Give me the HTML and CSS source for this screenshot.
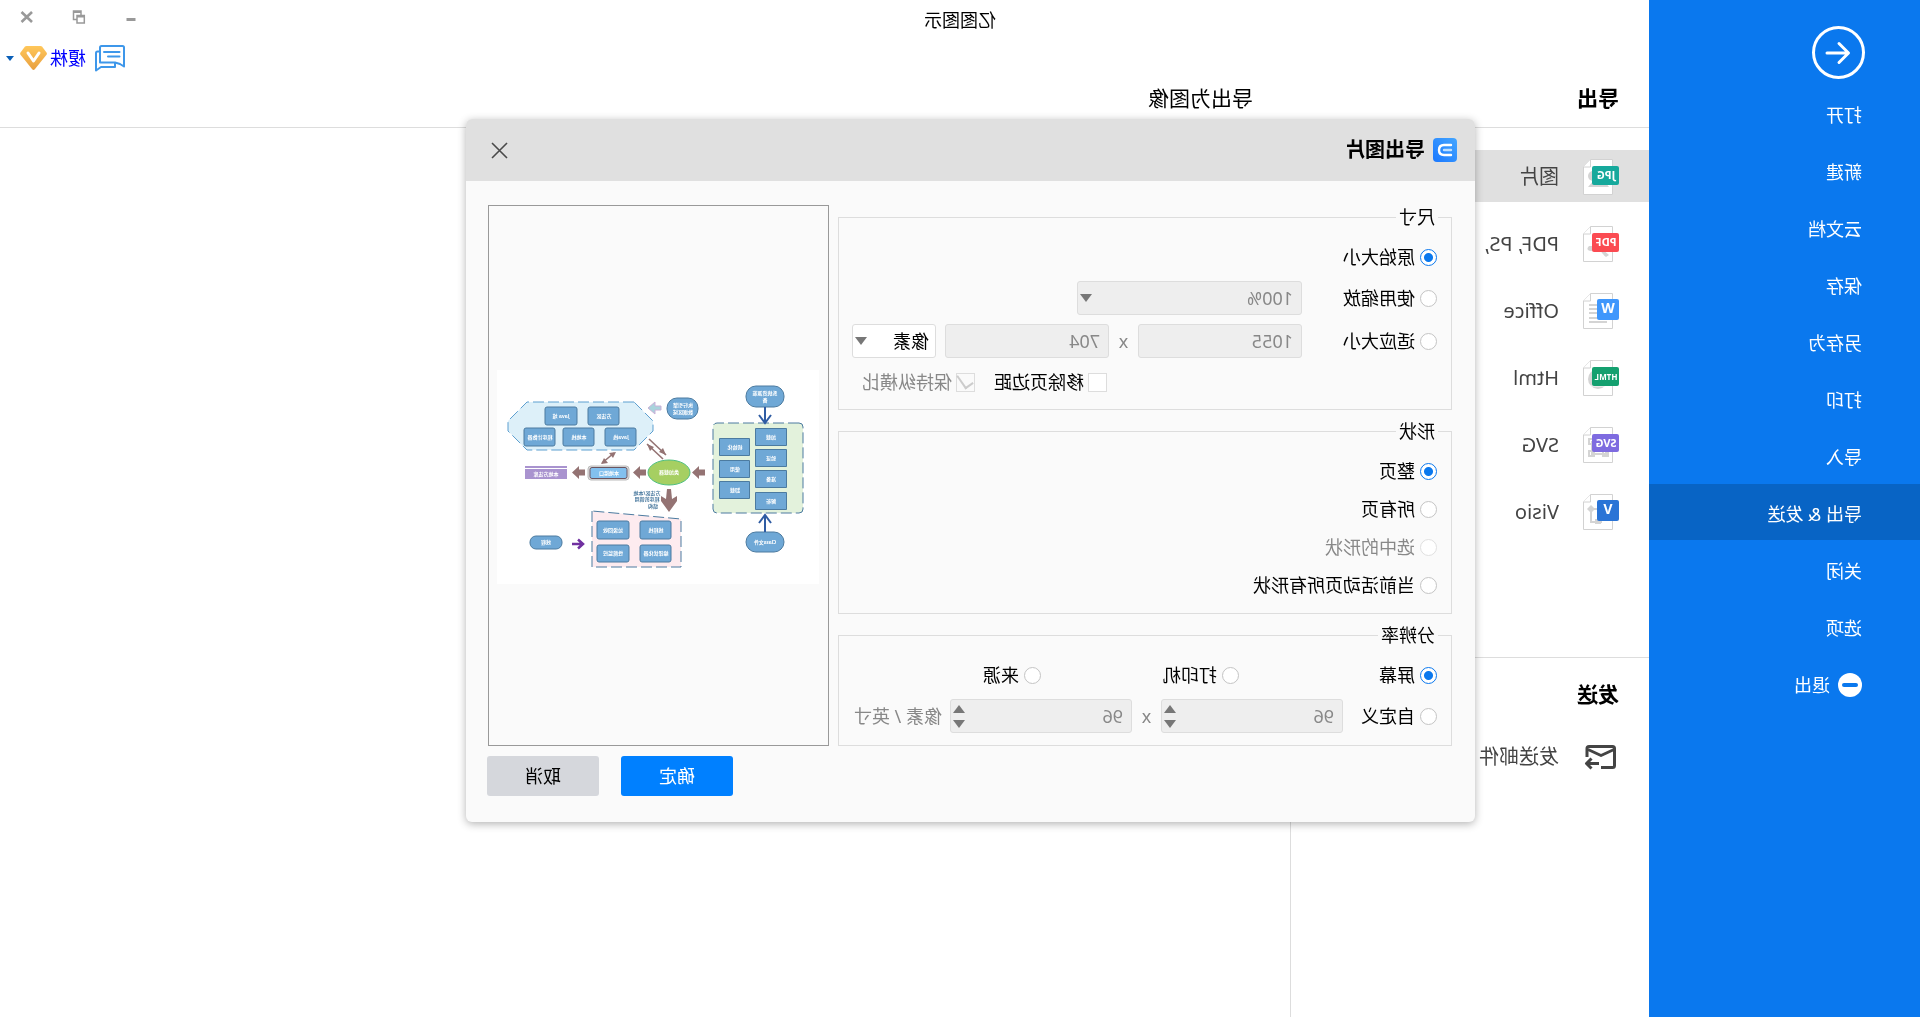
FILE: index.html
```html
<!DOCTYPE html>
<html lang="zh-CN">
<head>
<meta charset="utf-8">
<title>亿图图示</title>
<link rel="stylesheet" href="styles.css">
</head>
<body>
<div class="app">
  <nav class="sidebar">
    <button class="back" type="button" aria-label="返回">
      <svg width="53" height="53" viewBox="0 0 53 53" fill="none" stroke="#fff" stroke-width="3" stroke-linecap="round" stroke-linejoin="round"><circle cx="26.500" cy="26.500" r="25"/><path d="M38 27H17M26 17.500L16.500 27l9.500 9.500"/></svg>
    </button>
    <a class="nav-item" href="#">打开</a>
    <a class="nav-item" href="#">新建</a>
    <a class="nav-item" href="#">云文档</a>
    <a class="nav-item" href="#">保存</a>
    <a class="nav-item" href="#">另存为</a>
    <a class="nav-item" href="#">打印</a>
    <a class="nav-item" href="#">导入</a>
    <a class="nav-item current" href="#">导出 &amp; 发送</a>
    <a class="nav-item" href="#">关闭</a>
    <a class="nav-item" href="#">选项</a>
    <a class="nav-item" href="#"><svg width="24" height="24" viewBox="0 0 24 24"><circle cx="12" cy="12" r="12" fill="#fff"/><rect x="4" y="10" width="16" height="4" rx="2" fill="#0a78ee"/></svg>退出</a>
  </nav>

  <main class="main">
    <header class="top">
      <div class="titlebar">
        <span class="app-title">亿图图示</span>
        <div class="win-controls">
          <button type="button" aria-label="最小化"><svg width="14" height="14" viewBox="0 0 14 14"><path d="M2.500 9.500h9" stroke="#999" stroke-width="3"/></svg></button>
          <button type="button" aria-label="还原"><svg width="14" height="14" viewBox="0 0 14 14" fill="none" stroke="#999" stroke-width="1.500"><path d="M9 9.500h3.500V1H5v4"/><path d="M5 2h8" stroke-width="2"/><path d="M1.700 5.500H9V13H1.700z"/><path d="M1.700 6.500H9" stroke-width="2"/></svg></button>
          <button type="button" aria-label="关闭"><svg width="14" height="14" viewBox="0 0 14 14"><path d="M2 2l10.500 10M12.500 2L2 12" stroke="#999" stroke-width="2.600"/></svg></button>
        </div>
      </div>
      <div class="toolbar">
        <button type="button" class="chat" aria-label="消息"><svg width="30" height="27" viewBox="0 0 30 27" fill="none" stroke="#3e97ea" stroke-width="2" stroke-linejoin="round" stroke-linecap="round"><path d="M5 19L1 21.500V2.500Q1 1 2.500 1h21Q25 1 25 2.500V17.500H10L5 19"/><path d="M25 6.500h2.500Q29 6.500 29 8v17.500L24 22H10v-4"/><path d="M5.500 7h15.500M5.500 11.500H17"/></svg></button>
        <a class="user" href="#">榎株</a>
        <svg class="vip" width="27" height="24" viewBox="0 0 27 24"><defs><linearGradient id="gold" x1="0" y1="0" x2="0" y2="1"><stop offset="0" stop-color="#ffc75a"/><stop offset="1" stop-color="#e89f3f"/></linearGradient></defs><path d="M6.500 0h14q1 0 1.700.8l4.300 5.700q.8 1.200 0 2.300L15 23q-1.500 1.800-3 0L.5 8.800q-.8-1.100 0-2.300L4.800.8Q5.500 0 6.500 0z" fill="url(#gold)"/><path d="M8 7l5.500 8L19 7" fill="none" stroke="#fff" stroke-width="3" stroke-linecap="round" stroke-linejoin="round"/></svg>
        <svg class="caret" width="8" height="5" viewBox="0 0 8 5"><path d="M0 0h8L4 5z" fill="#0a5fb8"/></svg>
      </div>
      <div class="headings">
        <h2 class="head-export">导出</h2>
        <h2 class="head-image">导出为图像</h2>
      </div>
    </header>

    <div class="content">
      <aside class="formats">
        <a class="format current" href="#"><svg class="ficon" width="36" height="36" viewBox="0 0 36 36"><path class="sheet" d="M6.500.5H28.500L35.500 8v27.500h-29z"/><path class="sheet" d="M28.500.5V8h7"/><circle class="mark" cx="26" cy="17" r="5"/><path class="mark" d="M10 28l6-8 5 5 4-4 6 7z"/><rect y="7" width="27" height="19" rx="2" fill="#16a99c"/><text class="tag" x="13" y="20">JPG</text></svg>图片</a>
        <a class="format" href="#"><svg class="ficon" width="36" height="36" viewBox="0 0 36 36"><path class="sheet" d="M6.500.5H28.500L35.500 8v27.500h-29z"/><path class="sheet" d="M28.500.5V8h7"/><path class="mark" d="M10 29q6-5 10-9l10 0q4 4-2 5-4 0-8-3-3 6-7 9z"/><rect y="7" width="27" height="19" rx="2" fill="#fb4b52"/><text class="tag" x="13" y="20">PDF</text></svg>PDF, PS,</a>
        <a class="format" href="#"><svg class="ficon" width="36" height="36" viewBox="0 0 36 36"><path class="sheet" d="M6.500.5H28.500L35.500 8v27.500h-29z"/><path class="sheet" d="M28.500.5V8h7"/><path class="line" d="M20 12h10M20 16h10M20 20h10M20 25h10M12 29h18"/><rect y="6" width="22" height="21" rx="2" fill="#3f97fc"/><text class="tag big" x="11" y="20">W</text></svg>Office</a>
        <a class="format" href="#"><svg class="ficon" width="36" height="36" viewBox="0 0 36 36"><path class="sheet" d="M6.500.5H28.500L35.500 8v27.500h-29z"/><path class="sheet" d="M28.500.5V8h7"/><circle class="mark" cx="21" cy="19" r="10"/><path d="M12 26h18" stroke="#fff"/><rect y="7" width="27" height="19" rx="2" fill="#14a06f"/><text class="tag small" x="13" y="20">HTML</text></svg>Html</a>
        <a class="format" href="#"><svg class="ficon" width="36" height="36" viewBox="0 0 36 36"><path class="sheet" d="M6.500.5H28.500L35.500 8v27.500h-29z"/><path class="sheet" d="M28.500.5V8h7"/><path class="line" d="M13 15h14v12H13zM25 12h5v5h-5zM25 24h5v5h-5zM11 24h5v5h-5z"/><rect y="7" width="27" height="18" rx="2" fill="#7e6be0"/><text class="tag" x="13" y="20">SVG</text></svg>SVG</a>
        <a class="format" href="#"><svg class="ficon" width="36" height="36" viewBox="0 0 36 36"><path class="sheet" d="M6.500.5H28.500L35.500 8v27.500h-29z"/><path class="sheet" d="M28.500.5V8h7"/><path class="mark" d="M28 11l4 4-4 4-4-4z"/><path class="line" d="M28 18v10H17M22 15h6"/><rect class="mark" x="18" y="25" width="6" height="5"/><rect y="6" width="22" height="21" rx="2" fill="#2a74d6"/><text class="tag big" x="11" y="20">V</text></svg>Visio</a>
        <section class="send">
          <h2 class="head-send">发送</h2>
          <a class="format mail" href="#"><svg class="ficon" width="36" height="30" viewBox="0 0 36 30" fill="none" stroke="#444" stroke-width="3" stroke-linejoin="round"><path d="M18 25.500H6.500Q4.500 25.500 4.500 23.500V6.500Q4.500 4.500 6.500 4.500H30Q32 4.500 32 6.500V15"/><path d="M5 7.500l13 6 13-6"/><path d="M20 21.500h12M27.500 16.500l5 5-5 5"/></svg>发送邮件</a>
        </section>
      </aside>
      <section class="stage"></section>
    </div>
  </main>

  <form class="dialog" role="dialog" aria-labelledby="dlg-title">
    <header class="dlg-head">
      <svg width="24" height="24" viewBox="0 0 24 24"><defs><linearGradient id="logo" x1="0" y1="0" x2="1" y2="1"><stop offset="0" stop-color="#45a6ff"/><stop offset="1" stop-color="#1a78ff"/></linearGradient></defs><rect width="24" height="24" rx="4" fill="url(#logo)"/><path d="M6 7h7q5 0 5 5t-5 5H6" fill="none" stroke="#fff" stroke-width="2.400" stroke-linecap="round"/><path d="M6 12h7" stroke="#bfe0ff" stroke-width="2.400" stroke-linecap="round"/></svg>
      <h1 id="dlg-title">导出图片</h1>
      <button type="button" class="dlg-close" aria-label="关闭"><svg width="17" height="17" viewBox="0 0 17 17"><path d="M1 1l15 15M16 1L1 16" stroke="#4a4a4a" stroke-width="1.600"/></svg></button>
    </header>
    <div class="dlg-body">
      <div class="groups">
        <fieldset>
          <legend>尺寸</legend>
          <div class="row"><label class="opt"><input type="radio" name="size" checked>原始大小</label></div>
          <div class="row field-row">
            <label class="opt size-label"><input type="radio" name="size">使用缩放</label>
            <span class="pick zoom"><select aria-label="缩放" disabled><option>100%</option></select></span>
          </div>
          <div class="row field-row">
            <label class="opt size-label"><input type="radio" name="size">适应大小</label>
            <input class="field dim" type="text" value="1055" aria-label="宽度" disabled>
            <span class="times">x</span>
            <input class="field dim" type="text" value="704" aria-label="高度" disabled>
            <span class="pick unit"><select aria-label="单位"><option>像素</option></select></span>
          </div>
          <div class="row checks">
            <label class="opt tick"><input type="checkbox">移除页边距</label>
            <label class="opt tick off"><input type="checkbox" checked disabled>保持纵横比</label>
          </div>
        </fieldset>
        <fieldset class="shapes">
          <legend>形状</legend>
          <div class="row"><label class="opt"><input type="radio" name="shape" checked>整页</label></div>
          <div class="row"><label class="opt"><input type="radio" name="shape">所有页</label></div>
          <div class="row"><label class="opt off"><input type="radio" name="shape" disabled>选中的形状</label></div>
          <div class="row"><label class="opt"><input type="radio" name="shape">当前活动页所有形状</label></div>
        </fieldset>
        <fieldset>
          <legend>分辨率</legend>
          <div class="row thirds">
            <label class="opt"><input type="radio" name="dpi" checked>屏幕</label>
            <label class="opt"><input type="radio" name="dpi">打印机</label>
            <label class="opt"><input type="radio" name="dpi">来源</label>
          </div>
          <div class="row field-row">
            <label class="opt dpi-label"><input type="radio" name="dpi">自定义</label>
            <span class="spin"><input class="field" type="text" value="96" aria-label="水平分辨率" disabled></span>
            <span class="times">x</span>
            <span class="spin"><input class="field" type="text" value="96" aria-label="垂直分辨率" disabled></span>
            <span class="per">像素 / 英寸</span>
          </div>
        </fieldset>
      </div>
      <div class="preview">
        <svg class="diagram" viewBox="0 0 322 214" role="img" aria-label="预览">
          <rect width="322" height="214" fill="#fff"/>
          <g stroke="#4c7ba0" stroke-width="1" stroke-dasharray="11 4">
            <rect x="16" y="53" width="90" height="90" rx="4" fill="#e3f2dc"/>
            <path d="M227 141v56h-89v-48z" fill="#fdebef"/>
            <path d="M185 32h107l19 19v10l-19 19H185l-19-19V51z" fill="#ddf0f9" stroke="#5d9fd0"/>
          </g>
          <g fill="#6fa8d6" stroke="#4c7ba0">
            <rect x="35" y="16" width="38" height="21" rx="10"/><rect x="35" y="162" width="38" height="20" rx="10"/>
            <rect x="121" y="28" width="31" height="21" rx="10"/><rect x="257" y="166" width="32" height="13" rx="6"/>
            <path d="M32.500 58.500h31v17h-31zM32.500 79.500h31v17h-31zM32.500 100.500h31v17h-31zM32.500 122.500h31v17h-31zM69.500 68.500h30v17h-30zM69.500 90.500h30v17h-30zM69.500 111.500h30v17h-30z"/>
            <rect x="242" y="37" width="32" height="18" rx="2"/><rect x="200" y="37" width="31" height="18" rx="2"/>
            <rect x="264" y="58" width="31" height="18" rx="2"/><rect x="225" y="58" width="31" height="18" rx="2"/><rect x="183" y="58" width="31" height="18" rx="2"/>
            <rect x="190" y="151" width="32" height="18" rx="2"/><rect x="148" y="151" width="31" height="18" rx="2"/>
            <rect x="190" y="175" width="32" height="17" rx="2"/><rect x="148" y="175" width="31" height="17" rx="2"/>
          </g>
          <ellipse cx="150" cy="102.500" rx="21" ry="12.500" fill="#a6cf62" stroke="#4fbf80"/>
          <rect x="190" y="96" width="41" height="14" rx="3" fill="#ddd" stroke="#bbb"/>
          <rect x="192" y="97.500" width="37" height="11" rx="2" fill="#82c0ee" stroke="#6b5560"/>
          <path d="M252 96h42v2h-42zM252 99h42v10h-42z" fill="#a993cf"/>
          <g fill="none" stroke="#2f5ca3" stroke-width="2"><path d="M54 37v15M48 45l6 8 6-8M54 162v-16M48 153l6-8 6 8"/></g>
          <g fill="#947373">
            <path d="M114 99.500h6V96l7 6.500-7 6.500v-3.500h-6z"/><path d="M173 99.500h6V96l7 6.500-7 6.500v-3.500h-6z"/><path d="M234 99.500h6V96l7 6.500-7 6.500v-3.500h-6z"/>
            <path d="M148 119h4l1 10 5-3v5l-8 11-8-11v-5l5 3z"/>
            <path d="M153 85l3-7 4 4zM172 74l-3 7-4-4zM203 82l7 1-4 5zM218 94l-7-1 4-5z"/>
          </g>
          <path d="M158 36h6v-4l7 6-7 6v-4h-6z" fill="#a9d3dc" stroke="#cbb0d8"/>
          <g fill="none" stroke="#947373" stroke-width="1.600"><path d="M153 85l17-16M156 89l16-15M205 83l12 10"/></g>
          <path d="M247 174h-10M241 169.500l-5 4.500 5 4.500" fill="none" stroke="#7030a0" stroke-width="2.500"/>
          <g class="dtext">
            <text x="54" y="25">系统资源准</text><text x="54" y="32">备</text><text x="54" y="174">Class文件</text>
            <text x="136" y="37">执行引擎</text><text x="136" y="44">数据区域</text>
            <text x="48" y="69">加载</text><text x="48" y="90">验证</text><text x="48" y="111">准备</text><text x="48" y="133">解析</text>
            <text x="84" y="79">初始化</text><text x="84" y="101">使用</text><text x="84" y="122">卸载</text>
            <text x="258" y="48">Java 堆</text><text x="215" y="48">方法区</text>
            <text x="279" y="69">程序计数器</text><text x="240" y="69">本地栈</text><text x="198" y="69">Java栈</text>
            <text x="150" y="104">类加载器</text><text x="210" y="105">本地接口</text><text x="273" y="106">本地方法库</text>
            <text x="206" y="162">垃圾回收</text><text x="163" y="162">线程栈</text><text x="206" y="185">性能监控</text><text x="163" y="185">编译优化器</text><text x="273" y="174">线程</text>
            <g class="note"><text x="172" y="125">方法区/本地</text><text x="172" y="131">程序的调用</text><text x="166" y="138">结构</text></g>
          </g>
        </svg>
      </div>
    </div>
    <footer class="dlg-foot">
      <button type="submit" class="btn primary">确定</button>
      <button type="button" class="btn">取消</button>
    </footer>
  </form>
</div>
</body>
</html>
```
FILE: styles.css
```css
* { box-sizing: border-box; }

body {
  margin: 0;
  background: #fff;
  color: #000;
  font: 18px/24px "Noto Sans", "Noto Sans CJK SC", sans-serif;
}

h1, h2 { margin: 0; }
button, input, select { font: inherit; color: inherit; }
button { padding: 0; border: 0; background: none; }
a { color: inherit; text-decoration: none; }
svg { flex: none; }

/* The whole interface is laid out left to right and shown mirrored. */
.app {
  position: relative;
  display: flex;
  min-height: 100vh;
  overflow: hidden;
  transform: scaleX(-1);
}

/* Sidebar */
.sidebar {
  display: flex;
  flex-direction: column;
  gap: 1px;
  flex: none;
  width: 271px;
  background: #0a78ee;
  color: #fff;
}
.back { width: 53px; height: 53px; margin: 26px 0 5px 55px; }
.back svg { display: block; }
.nav-item {
  display: flex;
  align-items: center;
  gap: 8px;
  height: 56px;
  padding: 3px 0 0 58px;
}
.nav-item.current { background: #0864c5; }

/* Header */
.main { display: flex; flex-direction: column; flex: 1; min-width: 0; }
.top { border-bottom: 1px solid #ddd; }
.titlebar { display: flex; align-items: center; height: 40px; }
.app-title { flex: 1; text-align: center; }
.win-controls { display: flex; justify-content: flex-end; width: 271px; height: 34px; padding-right: 1px; }
.win-controls button { display: flex; align-items: center; justify-content: center; width: 52px; height: 28px; }
.toolbar { display: flex; align-items: center; justify-content: flex-end; height: 36px; padding-right: 6px; }
.chat { display: flex; margin-right: 9px; }
.user { color: #00f; margin-right: 3px; }
.caret { margin-left: 6px; }
.headings { display: flex; align-items: center; height: 51px; padding: 0 0 8px 30px; }
.headings h2, .head-send { font-size: 21px; line-height: 28px; }
.head-export { width: 366px; }
.headings .head-image { font-weight: 400; }

/* Format list */
.content { display: flex; flex: 1; }
.formats { width: 359px; padding-top: 22px; border-right: 1px solid #ddd; }
.format {
  display: flex;
  align-items: center;
  gap: 24px;
  height: 52px;
  margin-bottom: 15px;
  padding: 1px 0 0 30px;
  color: #444;
  font-size: 20px;
}
.format.current { background: #e0e0e0; }
.sheet { fill: #fff; stroke: #d2d2d2; }
.mark { fill: #d4d4d4; }
.line { fill: none; stroke: #d4d4d4; stroke-width: 2; }
.tag { fill: #fff; font-size: 11px; font-weight: 700; text-anchor: middle; }
.tag.small { font-size: 8px; }
.tag.big { font-size: 14px; }
.send { margin-top: 120px; border-top: 1px solid #ddd; padding-top: 22px; }
.head-send { padding-left: 30px; }
.mail { margin-top: 22px; }
.stage { flex: 1; }

/* Dialog */
.dialog {
  position: absolute;
  top: 119px;
  left: calc(50% - 515px);
  width: 1009px;
  border-radius: 6px;
  background: #fafafa;
  box-shadow: 0 2px 8px rgba(0, 0, 0, .3);
}
.dlg-head {
  display: flex;
  align-items: center;
  gap: 8px;
  height: 62px;
  padding: 0 25px 0 18px;
  border-radius: 6px 6px 0 0;
  background: #e0e0e0;
}
.dlg-head h1 { flex: 1; font-size: 20px; line-height: 28px; }
.dlg-close { display: flex; }
.dlg-body { display: flex; gap: 9px; padding: 24px 22px 0 23px; }
.groups { display: flex; flex-direction: column; gap: 9px; flex: 1; }

fieldset {
  display: flex;
  flex-direction: column;
  gap: 9px;
  min-width: 0;
  margin: 0;
  padding: 13px 13px 12px 14px;
  border: 1px solid #ddd;
}
fieldset.shapes { gap: 8px; padding-bottom: 13px; }
legend { padding: 0 3px; margin-left: -1px; }
.row { display: flex; align-items: center; height: 30px; }
.field-row { height: 34px; }
.thirds { display: grid; grid-template-columns: 198px 198px 1fr; }

.opt { display: flex; align-items: center; gap: 5px; flex: none; }
.off, .times, .per { color: #888; }
.size-label { width: 135px; }
.dpi-label { width: 94px; }
.opt input {
  appearance: none;
  flex: none;
  width: 17px;
  height: 17px;
  margin: 0;
  border: 1px solid #c4c4c4;
  border-radius: 50%;
  background: #fff;
}
.opt input[type="radio"]:checked {
  border-color: #0a78ee;
  background: radial-gradient(circle, #0a78ee 4px, #fff 5px);
}
.opt input:disabled { border-color: #e0e0e0; }
.opt.tick { gap: 4px; }
.opt.tick input { width: 19px; height: 19px; border-color: #ddd; border-radius: 0; }
.opt.tick input:checked { display: grid; place-items: center; background: #fafafa; }
.opt.tick input:checked::after {
  content: "";
  width: 8px;
  height: 14px;
  border: solid #ccc;
  border-width: 0 2px 2px 0;
  transform: translateY(-2px) rotate(35deg);
}
.checks { gap: 19px; padding-left: 330px; }

.field, .pick select {
  width: 100%;
  height: 34px;
  margin: 0;
  padding: 0 8px;
  border: 1px solid #ddd;
  border-radius: 3px;
  background: #eee;
  color: #888;
  opacity: 1;
}
.field.dim { width: 164px; }
.times { width: 29px; text-align: center; }
.pick { position: relative; }
.pick select { appearance: none; }
.pick.zoom { width: 225px; }
.pick.unit { width: 84px; margin-left: 9px; }
.pick.unit select { padding-left: 6px; background: #fff; color: #000; }
.pick::after, .spin::before, .spin::after {
  content: "";
  position: absolute;
  right: 3px;
  border: solid transparent;
  border-width: 0 6px;
}
.pick::after { top: 13px; border-top: 8px solid #777; }
.spin { position: relative; width: 182px; }
.spin::before { top: 6px; border-bottom: 8px solid #777; }
.spin::after { bottom: 5px; border-top: 8px solid #777; }
.per { margin-left: 8px; }

.preview {
  display: flex;
  align-items: center;
  justify-content: center;
  width: 341px;
  padding-top: 3px;
  border: 1px solid #999;
}
.diagram { width: 322px; }
.dtext { fill: #fff; font-size: 5px; font-weight: 700; text-anchor: middle; }
.note { fill: #4c7ba0; }

.dlg-foot { display: flex; justify-content: flex-end; gap: 22px; padding: 10px 21px 26px; }
.btn { width: 112px; height: 40px; border-radius: 3px; background: #d5d7dc; }
.btn.primary { background: #0080ff; color: #fff; }
```
